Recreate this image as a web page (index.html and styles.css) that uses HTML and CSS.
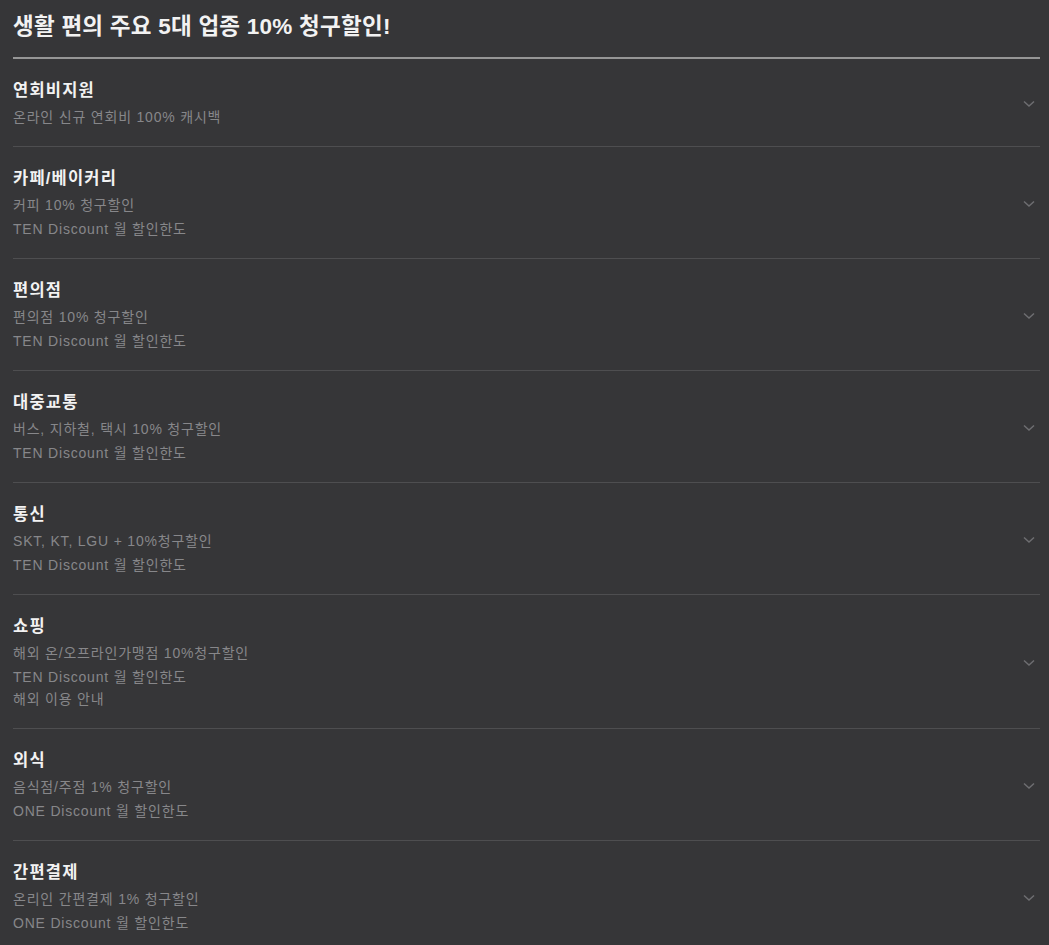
FILE: index.html
```html
<!DOCTYPE html>
<html lang="ko">
<head>
	<meta charset="UTF-8">
	<title>생활 편의 주요 5대 업종 10% 청구할인!</title>
	<link rel="stylesheet" href="styles.css">
</head>
<body>
	<div class="benefit">
		<h2 class="benefit-title">생활 편의 주요 5대 업종 10% 청구할인!</h2>
		<ul class="benefit-list">
			<li class="benefit-item">
				<div class="item-text">
					<strong class="item-name">연회비지원</strong>
					<p class="item-desc">온라인 신규 연회비 100% 캐시백</p>
				</div>
				<span class="chevron"><svg width="12" height="8" viewBox="0 0 12 8"><path d="M1 1.5 6 6l5-4.5" fill="none" stroke="#6e6e71" stroke-width="1.5"/></svg></span>
			</li>
			<li class="benefit-item">
				<div class="item-text">
					<strong class="item-name">카페/베이커리</strong>
					<p class="item-desc">커피 10% 청구할인</p>
					<p class="item-desc">TEN Discount 월 할인한도</p>
				</div>
				<span class="chevron"><svg width="12" height="8" viewBox="0 0 12 8"><path d="M1 1.5 6 6l5-4.5" fill="none" stroke="#6e6e71" stroke-width="1.5"/></svg></span>
			</li>
			<li class="benefit-item">
				<div class="item-text">
					<strong class="item-name">편의점</strong>
					<p class="item-desc">편의점 10% 청구할인</p>
					<p class="item-desc">TEN Discount 월 할인한도</p>
				</div>
				<span class="chevron"><svg width="12" height="8" viewBox="0 0 12 8"><path d="M1 1.5 6 6l5-4.5" fill="none" stroke="#6e6e71" stroke-width="1.5"/></svg></span>
			</li>
			<li class="benefit-item">
				<div class="item-text">
					<strong class="item-name">대중교통</strong>
					<p class="item-desc">버스, 지하철, 택시 10% 청구할인</p>
					<p class="item-desc">TEN Discount 월 할인한도</p>
				</div>
				<span class="chevron"><svg width="12" height="8" viewBox="0 0 12 8"><path d="M1 1.5 6 6l5-4.5" fill="none" stroke="#6e6e71" stroke-width="1.5"/></svg></span>
			</li>
			<li class="benefit-item">
				<div class="item-text">
					<strong class="item-name">통신</strong>
					<p class="item-desc">SKT, KT, LGU + 10%청구할인</p>
					<p class="item-desc">TEN Discount 월 할인한도</p>
				</div>
				<span class="chevron"><svg width="12" height="8" viewBox="0 0 12 8"><path d="M1 1.5 6 6l5-4.5" fill="none" stroke="#6e6e71" stroke-width="1.5"/></svg></span>
			</li>
			<li class="benefit-item">
				<div class="item-text">
					<strong class="item-name">쇼핑</strong>
					<p class="item-desc">해외 온/오프라인가맹점 10%청구할인</p>
					<p class="item-desc">TEN Discount 월 할인한도</p>
					<p class="item-desc">해외 이용 안내</p>
				</div>
				<span class="chevron"><svg width="12" height="8" viewBox="0 0 12 8"><path d="M1 1.5 6 6l5-4.5" fill="none" stroke="#6e6e71" stroke-width="1.5"/></svg></span>
			</li>
			<li class="benefit-item">
				<div class="item-text">
					<strong class="item-name">외식</strong>
					<p class="item-desc">음식점/주점 1% 청구할인</p>
					<p class="item-desc">ONE Discount 월 할인한도</p>
				</div>
				<span class="chevron"><svg width="12" height="8" viewBox="0 0 12 8"><path d="M1 1.5 6 6l5-4.5" fill="none" stroke="#6e6e71" stroke-width="1.5"/></svg></span>
			</li>
			<li class="benefit-item">
				<div class="item-text">
					<strong class="item-name">간편결제</strong>
					<p class="item-desc">온리인 간편결제 1% 청구할인</p>
					<p class="item-desc">ONE Discount 월 할인한도</p>
				</div>
				<span class="chevron"><svg width="12" height="8" viewBox="0 0 12 8"><path d="M1 1.5 6 6l5-4.5" fill="none" stroke="#6e6e71" stroke-width="1.5"/></svg></span>
			</li>
		</ul>
	</div>
</body>
</html>
```

FILE: styles.css
```css
html, body {
	margin: 0;
	background-color: rgb(54, 54, 56);
}

body {
	font-family: "Liberation Sans", "Noto Sans CJK KR", sans-serif;
	color: rgb(242, 242, 242);
}

.benefit {
	padding: 0 9px 0 13px;
}

.benefit-title {
	margin: 0;
	padding: 13px 0 16px;
	font-size: 22.5px;
	line-height: 28px;
	font-weight: bold;
	letter-spacing: 0.25px;
	border-bottom: 2px solid rgb(150, 150, 150);
}

.benefit-list {
	list-style: none;
	margin: 0;
	padding: 0;
}

.benefit-item {
	display: flex;
	align-items: center;
	justify-content: space-between;
	padding: 20px 0 18px;
	border-bottom: 1px solid rgb(78, 78, 80);
}

.benefit-item:last-child {
	border-bottom: none;
}

.item-name {
	display: block;
	margin-bottom: 5px;
	font-size: 16.5px;
	line-height: 22px;
	letter-spacing: 1.2px;
	color: rgb(242, 242, 242);
}

.item-desc {
	margin: 0;
	font-size: 14px;
	line-height: 22px;
	letter-spacing: 0.8px;
	color: rgb(135, 135, 138);
}

.item-desc:nth-of-type(2) {
	margin-top: 2px;
}

.chevron {
	display: flex;
	margin-right: 5px;
}
```
